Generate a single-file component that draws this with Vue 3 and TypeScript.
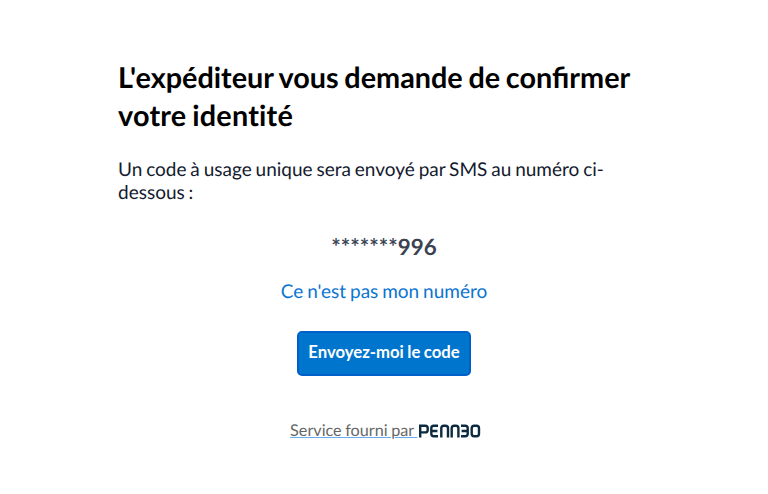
<script setup lang="ts">
const maskedNumber: string = '*******996'
</script>

<template>
  <main class="page">
    <h1>L'expéditeur vous demande de confirmer <span class="plain">votre identité</span></h1>
    <p class="intro">Un code à usage unique sera envoyé par SMS au numéro ci-dessous :</p>
    <div class="number">{{ maskedNumber }}</div>
    <a class="link">Ce n'est pas mon numéro</a>
    <button class="send" type="button">Envoyez-moi le code</button>
    <footer class="footer">
      <a class="service">Service fourni par&nbsp;</a>
      <svg class="logo" viewBox="0 0 62 14" width="62" height="14" role="img" aria-label="Penneo">
        <path d="M1.2 13.5V1.7H6.3Q8.7 1.7 8.7 4V6Q8.7 8.4 6.3 8.4H1.2M19 1.7H14.8Q12.3 1.7 12.3 4.2V9.8Q12.3 12.3 14.8 12.3H19M12.3 7H18.4M22.3 13.5V4.2Q22.3 1.7 24.8 1.7H26.5Q29 1.7 29 4.2V13.5M32.7 13.5V4.2Q32.7 1.7 35.2 1.7H36.9Q39.4 1.7 39.4 4.2V13.5M42 1.7H46.2Q48.7 1.7 48.7 4.2V9.8Q48.7 12.3 46.2 12.3H42M42.6 7H48.7M55.2 1.7H57.5Q60 1.7 60 4.2V9.8Q60 12.3 57.5 12.3H55.2Q52.7 12.3 52.7 9.8V4.2Q52.7 1.7 55.2 1.7Z" />
      </svg>
    </footer>
  </main>
</template>

<style>
body { background: #fff; }
</style>
<style scoped>
.page {
  box-sizing: border-box;
  width: 532px;
  margin: 0 auto;
  padding-top: 59px;
  display: flex;
  flex-direction: column;
  align-items: center;
  font-family: Lato, sans-serif;
  color: #141a2e;
  text-rendering: geometricPrecision;
}
h1 { width: 100%; margin: 0; color: #000; font-size: 28.8px; line-height: 38px; font-weight: 700; word-spacing: -1.3px; }
.plain { font-variant-ligatures: none; letter-spacing: 0.2px; }
.intro { width: 100%; margin: 23px 0 0; font-size: 19px; line-height: 23px; word-spacing: -1px; }
.number { margin-top: 28px; font-size: 22.4px; line-height: 30px; font-weight: 700; color: #3b4252; }
.link { margin-top: 18px; font-size: 19px; line-height: 23px; color: #0b74d1; word-spacing: -1px; }
.send {
  box-sizing: border-box;
  width: 174px;
  height: 45px;
  margin-top: 27.5px;
  padding: 0 0 2px;
  border: 2px solid #0060c9;
  border-radius: 5px;
  background: #0075cd;
  color: #fff;
  font: 700 16.7px/20px Lato, sans-serif;
  word-spacing: -0.6px;
}
.footer { margin-top: 44.5px; padding-left: 3px; display: flex; align-items: center; }
.service { color: #666; font-size: 16.2px; line-height: 22px; text-decoration: underline #67aef0 1px; word-spacing: -0.6px; }
.logo { display: block; margin-left: 1.5px; fill: none; stroke: #0c2b40; stroke-width: 2.4; }
</style>
